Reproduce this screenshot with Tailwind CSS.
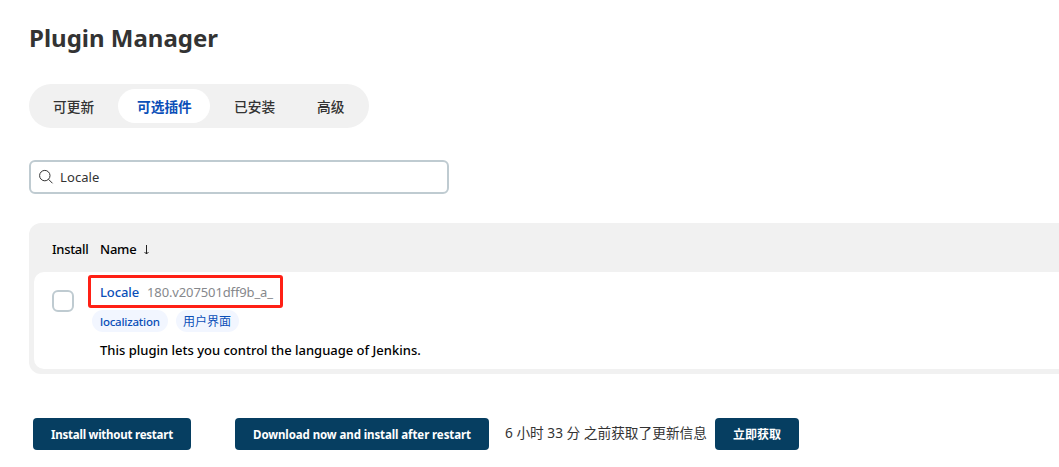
<!DOCTYPE html>
<html lang="zh">
<head>
<meta charset="utf-8">
<title>Plugin Manager</title>
<script src="https://cdn.jsdelivr.net/npm/@tailwindcss/browser@4"></script>
</head>
<body class="bg-white w-[1059px] h-[467px] overflow-hidden pl-[29px] pt-[22px] font-['Noto_Sans','Noto_Sans_CJK_SC',sans-serif] text-[13px] text-[#333] whitespace-nowrap">
<h1 class="h-8 leading-8 text-[24px] font-bold">Plugin Manager</h1>
<nav class="mt-[30px] flex w-[340px] h-11 rounded-full bg-[#f1f1f1] p-[5px] text-[13.7px] font-medium leading-[36px]">
  <a class="w-[84px] pl-[19px]">可更新</a>
  <a class="h-[34px] w-[92px] rounded-full bg-white pl-[19px] text-[#0b4fb8] font-bold">可选插件</a>
  <a class="w-[83px] pl-6">已安装</a>
  <a class="pl-6">高级</a>
</nav>
<div class="mt-8 flex w-[420px] h-[34px] items-center rounded-md border-2 border-[#bfcbd1] bg-white pl-[7px]">
  <svg class="size-4" viewBox="0 0 16 16" fill="none" stroke="#333" stroke-width="1"><circle cx="6.8" cy="6.6" r="5.2"/><path d="M10.5 10.3l4 4"/></svg>
  <span class="ml-[6px] pt-[2px] tracking-[0.1px]">Locale</span>
</div>
<section class="mt-[29px] h-[151px] rounded-l-xl bg-[#f1f1f1] pl-[5px] text-black">
  <div class="flex h-[49px] items-center pl-[17px] pt-1 font-medium">
    <span class="ml-px w-12 tracking-[-0.3px]">Install</span><span class="w-[43px] tracking-[-0.2px]">Name</span>
    <svg class="mt-px w-[7px] h-[10px]" viewBox="0 0 7 10" fill="none" stroke="#222" stroke-width="1"><path d="M3.5 0v9M1.5 7l2 2 2-2"/></svg>
  </div>
  <div class="flex h-[97px] rounded-l-[10px] bg-white pl-[18px]">
    <div class="mt-[18px] size-[22px] rounded-md border-2 border-[#bfcbd1]"></div>
    <div class="ml-[14px] pt-[3px]">
      <div class="flex h-[33px] w-[195px] items-center rounded-[3px] border-3 border-[#ff2015] pl-[9px] pt-[2px]">
        <span class="w-[47px] font-medium tracking-[-0.1px] text-[#0b4fb8]">Locale</span><span class="tracking-[-0.12px] text-[#86888c]">180.v207501dff9b_a_</span>
      </div>
      <div class="ml-1 mt-[2px] flex h-[22px] gap-2 text-[#0b4fb8] leading-[23px]">
        <span class="w-[76px] rounded-full bg-[#f2f6ff] pl-2 text-[11.5px] font-medium tracking-[-0.22px]">localization</span>
        <span class="w-[63px] rounded-full bg-[#f2f6ff] pl-[7px] text-[12px]">用户界面</span>
      </div>
      <p class="ml-3 mt-2 leading-5 font-medium">This plugin lets you control the language of Jenkins.</p>
    </div>
  </div>
</section>
<footer class="mt-11 ml-1 flex h-8 text-[11.5px] font-bold leading-[33px]">
  <button class="w-[158px] rounded bg-[#063e61] text-white tracking-[-0.24px]">Install without restart</button>
  <button class="ml-11 w-[254px] rounded bg-[#063e61] text-white tracking-[-0.1px]">Download now and install after restart</button>
  <span class="ml-4 w-[210px] text-[13.7px] font-normal leading-[30px]">6 小时 33 分 之前获取了更新信息</span>
  <button class="w-[84px] rounded bg-[#063e61] text-[12px] text-white">立即获取</button>
</footer>
</body>
</html>
